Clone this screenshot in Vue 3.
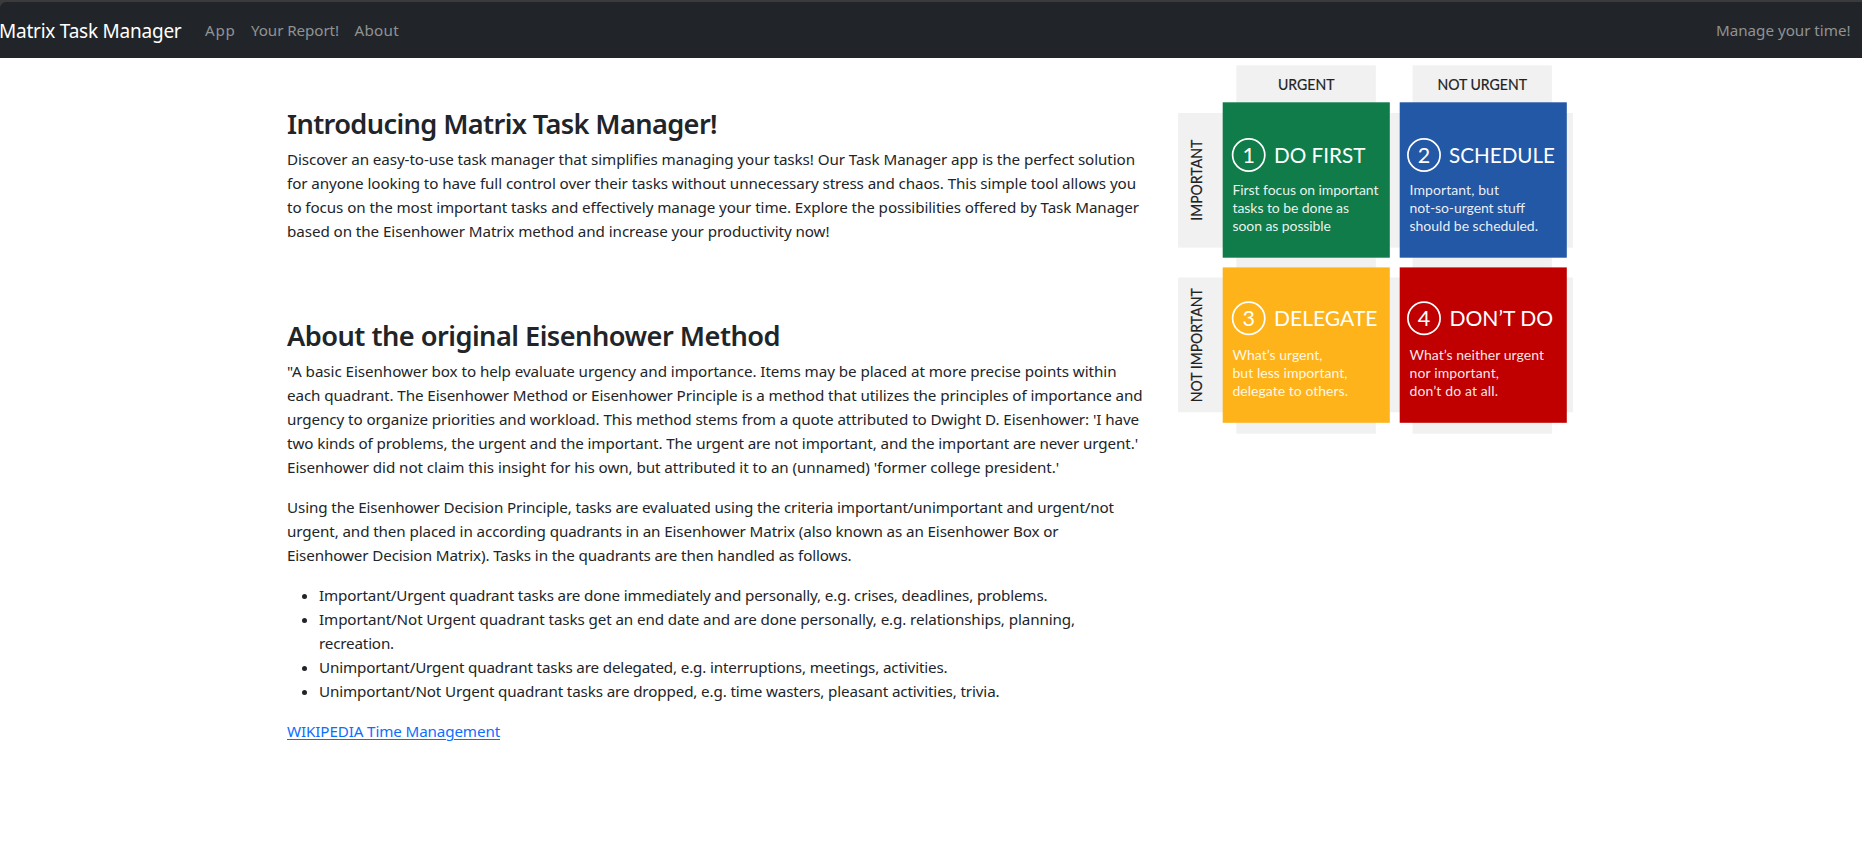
<script setup>
// Spreads a line over its intended measure by adjusting the tracking.
const vFit = {
  mounted(el, { value }) {
    const natural = el.getBoundingClientRect().width
    el.style.letterSpacing = (value - natural) / el.textContent.length + 'px'
  },
}

const links = [
  { text: 'App', w: 30.5 },
  { text: 'Your Report!', w: 88 },
  { text: 'About', w: 44.5 },
]

const intro = [
  { text: 'Discover an easy-to-use task manager that simplifies managing your tasks! Our Task Manager app is the perfect solution', w: 848 },
  { text: 'for anyone looking to have full control over their tasks without unnecessary stress and chaos. This simple tool allows you', w: 849 },
  { text: 'to focus on the most important tasks and effectively manage your time. Explore the possibilities offered by Task Manager', w: 852 },
  { text: 'based on the Eisenhower Matrix method and increase your productivity now!', w: 542.5 },
]

const method = [
  [
    { text: '"A basic Eisenhower box to help evaluate urgency and importance. Items may be placed at more precise points within', w: 829.5 },
    { text: 'each quadrant. The Eisenhower Method or Eisenhower Principle is a method that utilizes the principles of importance and', w: 855.5 },
    { text: "urgency to organize priorities and workload. This method stems from a quote attributed to Dwight D. Eisenhower: 'I have", w: 852 },
    { text: "two kinds of problems, the urgent and the important. The urgent are not important, and the important are never urgent.'", w: 851 },
    { text: "Eisenhower did not claim this insight for his own, but attributed it to an (unnamed) 'former college president.'", w: 772 },
  ],
  [
    { text: 'Using the Eisenhower Decision Principle, tasks are evaluated using the criteria important/unimportant and urgent/not', w: 827 },
    { text: 'urgent, and then placed in according quadrants in an Eisenhower Matrix (also known as an Eisenhower Box or', w: 771.5 },
    { text: 'Eisenhower Decision Matrix). Tasks in the quadrants are then handled as follows.', w: 564.5 },
  ],
]

const items = [
  [{ text: 'Important/Urgent quadrant tasks are done immediately and personally, e.g. crises, deadlines, problems.', w: 728.5 }],
  [
    { text: 'Important/Not Urgent quadrant tasks get an end date and are done personally, e.g. relationships, planning,', w: 756 },
    { text: 'recreation.', w: 75 },
  ],
  [{ text: 'Unimportant/Urgent quadrant tasks are delegated, e.g. interruptions, meetings, activities.', w: 628.5 }],
  [{ text: 'Unimportant/Not Urgent quadrant tasks are dropped, e.g. time wasters, pleasant activities, trivia.', w: 680.5 }],
]

const cells = [
  {
    n: 1, fill: '#0f7c4a', x: 44.7, y: 37.3, cx: 70.7, title: 'DO FIRST', tx: 96, tw: 91.5,
    lines: [['First focus on important', 146], ['tasks to be done as', 116.5], ['soon as possible', 98.5]],
  },
  {
    n: 2, fill: '#2358a6', x: 221.7, y: 37.3, cx: 246, title: 'SCHEDULE', tx: 271, tw: 106,
    lines: [['Important, but', 89.5], ['not-so-urgent stuff', 115.5], ['should be scheduled.', 128.5]],
  },
  {
    n: 3, fill: '#feb31a', x: 44.7, y: 202.4, cx: 70.7, title: 'DELEGATE', tx: 96, tw: 103.5,
    lines: [['What’s urgent,', 90], ['but less important,', 115], ['delegate to others.', 115.5]],
  },
  {
    n: 4, fill: '#c00000', x: 221.7, y: 202.4, cx: 246, title: 'DON’T DO', tx: 271.5, tw: 103.5,
    lines: [['What’s neither urgent', 134.5], ['nor important,', 89.5], ['don’t do at all.', 88.5]],
  },
]
</script>

<template>
  <div class="page">
    <div class="edge">
      <nav class="navbar">
        <a class="brand"><span v-fit="182.5" class="line">Matrix Task Manager</span></a>
        <a v-for="l in links" :key="l.text" class="link"><span v-fit="l.w" class="line">{{ l.text }}</span></a>
        <span class="link tagline"><span v-fit="134.5" class="line">Manage your time!</span></span>
      </nav>
    </div>

    <main class="container">
      <div class="copy">
        <section class="intro">
          <h2><span v-fit="430" class="line">Introducing Matrix Task Manager!</span></h2>
          <p>
            <template v-for="l in intro" :key="l.text"><span v-fit="l.w" class="line">{{ l.text }}</span><br></template>
          </p>
        </section>
        <section>
          <h2><span v-fit="493" class="line">About the original Eisenhower Method</span></h2>
          <p v-for="(p, i) in method" :key="i">
            <template v-for="l in p" :key="l.text"><span v-fit="l.w" class="line">{{ l.text }}</span><br></template>
          </p>
          <ul>
            <li v-for="(item, i) in items" :key="i">
              <template v-for="l in item" :key="l.text"><span v-fit="l.w" class="line">{{ l.text }}</span><br></template>
            </li>
          </ul>
          <a class="wiki"><span v-fit="213" class="line">WIKIPEDIA Time Management</span></a>
        </section>
      </div>

      <svg class="matrix" width="396" height="369" viewBox="0 0 396 369">
        <g fill="#f1f1f1">
          <rect x="58.4" y="0.3" width="139.4" height="368.4" />
          <rect x="234.6" y="0.3" width="139.3" height="368.4" />
          <rect x="0.1" y="48" width="394.8" height="134.6" />
          <rect x="0.1" y="212.5" width="394.8" height="134.8" />
        </g>
        <g class="axis">
          <text x="100" y="25.2" textLength="56.5" lengthAdjust="spacingAndGlyphs">URGENT</text>
          <text x="259.5" y="25.2" textLength="89.5" lengthAdjust="spacingAndGlyphs">NOT URGENT</text>
          <text transform="translate(24.3 155.8) rotate(-90)" textLength="81" lengthAdjust="spacingAndGlyphs">IMPORTANT</text>
          <text transform="translate(24.3 337.3) rotate(-90)" textLength="114" lengthAdjust="spacingAndGlyphs">NOT IMPORTANT</text>
        </g>
        <g v-for="c in cells" :key="c.n">
          <rect :x="c.x" :y="c.y" width="167.1" height="155.4" :fill="c.fill" />
          <circle :cx="c.cx" :cy="c.y + (c.n > 2 ? 50.8 : 52.7)" r="16.1" />
          <text class="num" :x="c.cx" :y="c.y + (c.n > 2 ? 58.8 : 60.9)">{{ c.n }}</text>
          <text
            class="title" :x="c.tx" :y="c.y + (c.n > 2 ? 58.8 : 61)"
            :textLength="c.tw" lengthAdjust="spacingAndGlyphs"
          >{{ c.title }}</text>
          <text
            v-for="(l, i) in c.lines" :key="i" class="note"
            :x="c.x + 9.8" :y="c.y + 92.6 + i * 18" :textLength="l[1]"
          >{{ l[0] }}</text>
        </g>
      </svg>
    </main>
  </div>
</template>

<style>
body {
  margin: 0;
  background: #fff;
}
</style>

<style scoped>
.page {
  min-height: 857px;
  overflow: hidden;
  font-family: 'Noto Sans', 'Open Sans', sans-serif;
  font-size: 15.2px;
  line-height: 24px;
  color: #212529;
}
.line {
  display: inline-block;
  white-space: nowrap;
}
.edge {
  background: #3b3b3b;
  padding-top: 2px;
}
.navbar {
  display: flex;
  align-items: center;
  height: 56px;
  box-sizing: border-box;
  padding-right: 11.5px;
  background: #212529;
  border-top-left-radius: 6px;
}
.brand {
  margin-left: -1px;
  margin-right: 23.5px;
  padding-top: 1px;
  font-size: 19px;
  line-height: 30px;
  color: #fff;
}
.link {
  margin-right: 15.5px;
  color: #909294;
}
.tagline {
  margin-left: auto;
  margin-right: 0;
}
.container {
  display: flex;
  width: 1296px;
  margin-left: 287px;
}
.copy {
  width: 891px;
  padding-top: 49px;
}
.intro {
  padding-bottom: 76.4px;
}
h2 {
  margin: 0 0 6px;
  font-size: 27.2px;
  font-weight: 600;
  line-height: 33.6px;
}
p {
  margin: 0 0 16px;
}
.intro p {
  margin: 0;
}
ul {
  margin: 0 0 16px;
  padding-left: 32px;
}
.wiki {
  color: #0d6efd;
}
.wiki .line {
  text-decoration: underline;
  text-underline-offset: 2px;
  text-decoration-thickness: 1px;
}
.matrix {
  margin-top: 7px;
  font-family: Lato, sans-serif;
}
.axis {
  font-size: 15.3px;
  fill: #222;
  stroke: #222;
  stroke-width: 0.2;
}
circle {
  fill: none;
  stroke: #fff;
  stroke-width: 1.7;
}
.num {
  font-size: 21.5px;
  text-anchor: middle;
  fill: #fff;
}
.title {
  font-size: 21.5px;
  fill: #fff;
}
.note {
  font-size: 14px;
  fill: #fff;
  fill-opacity: 0.92;
}
</style>
